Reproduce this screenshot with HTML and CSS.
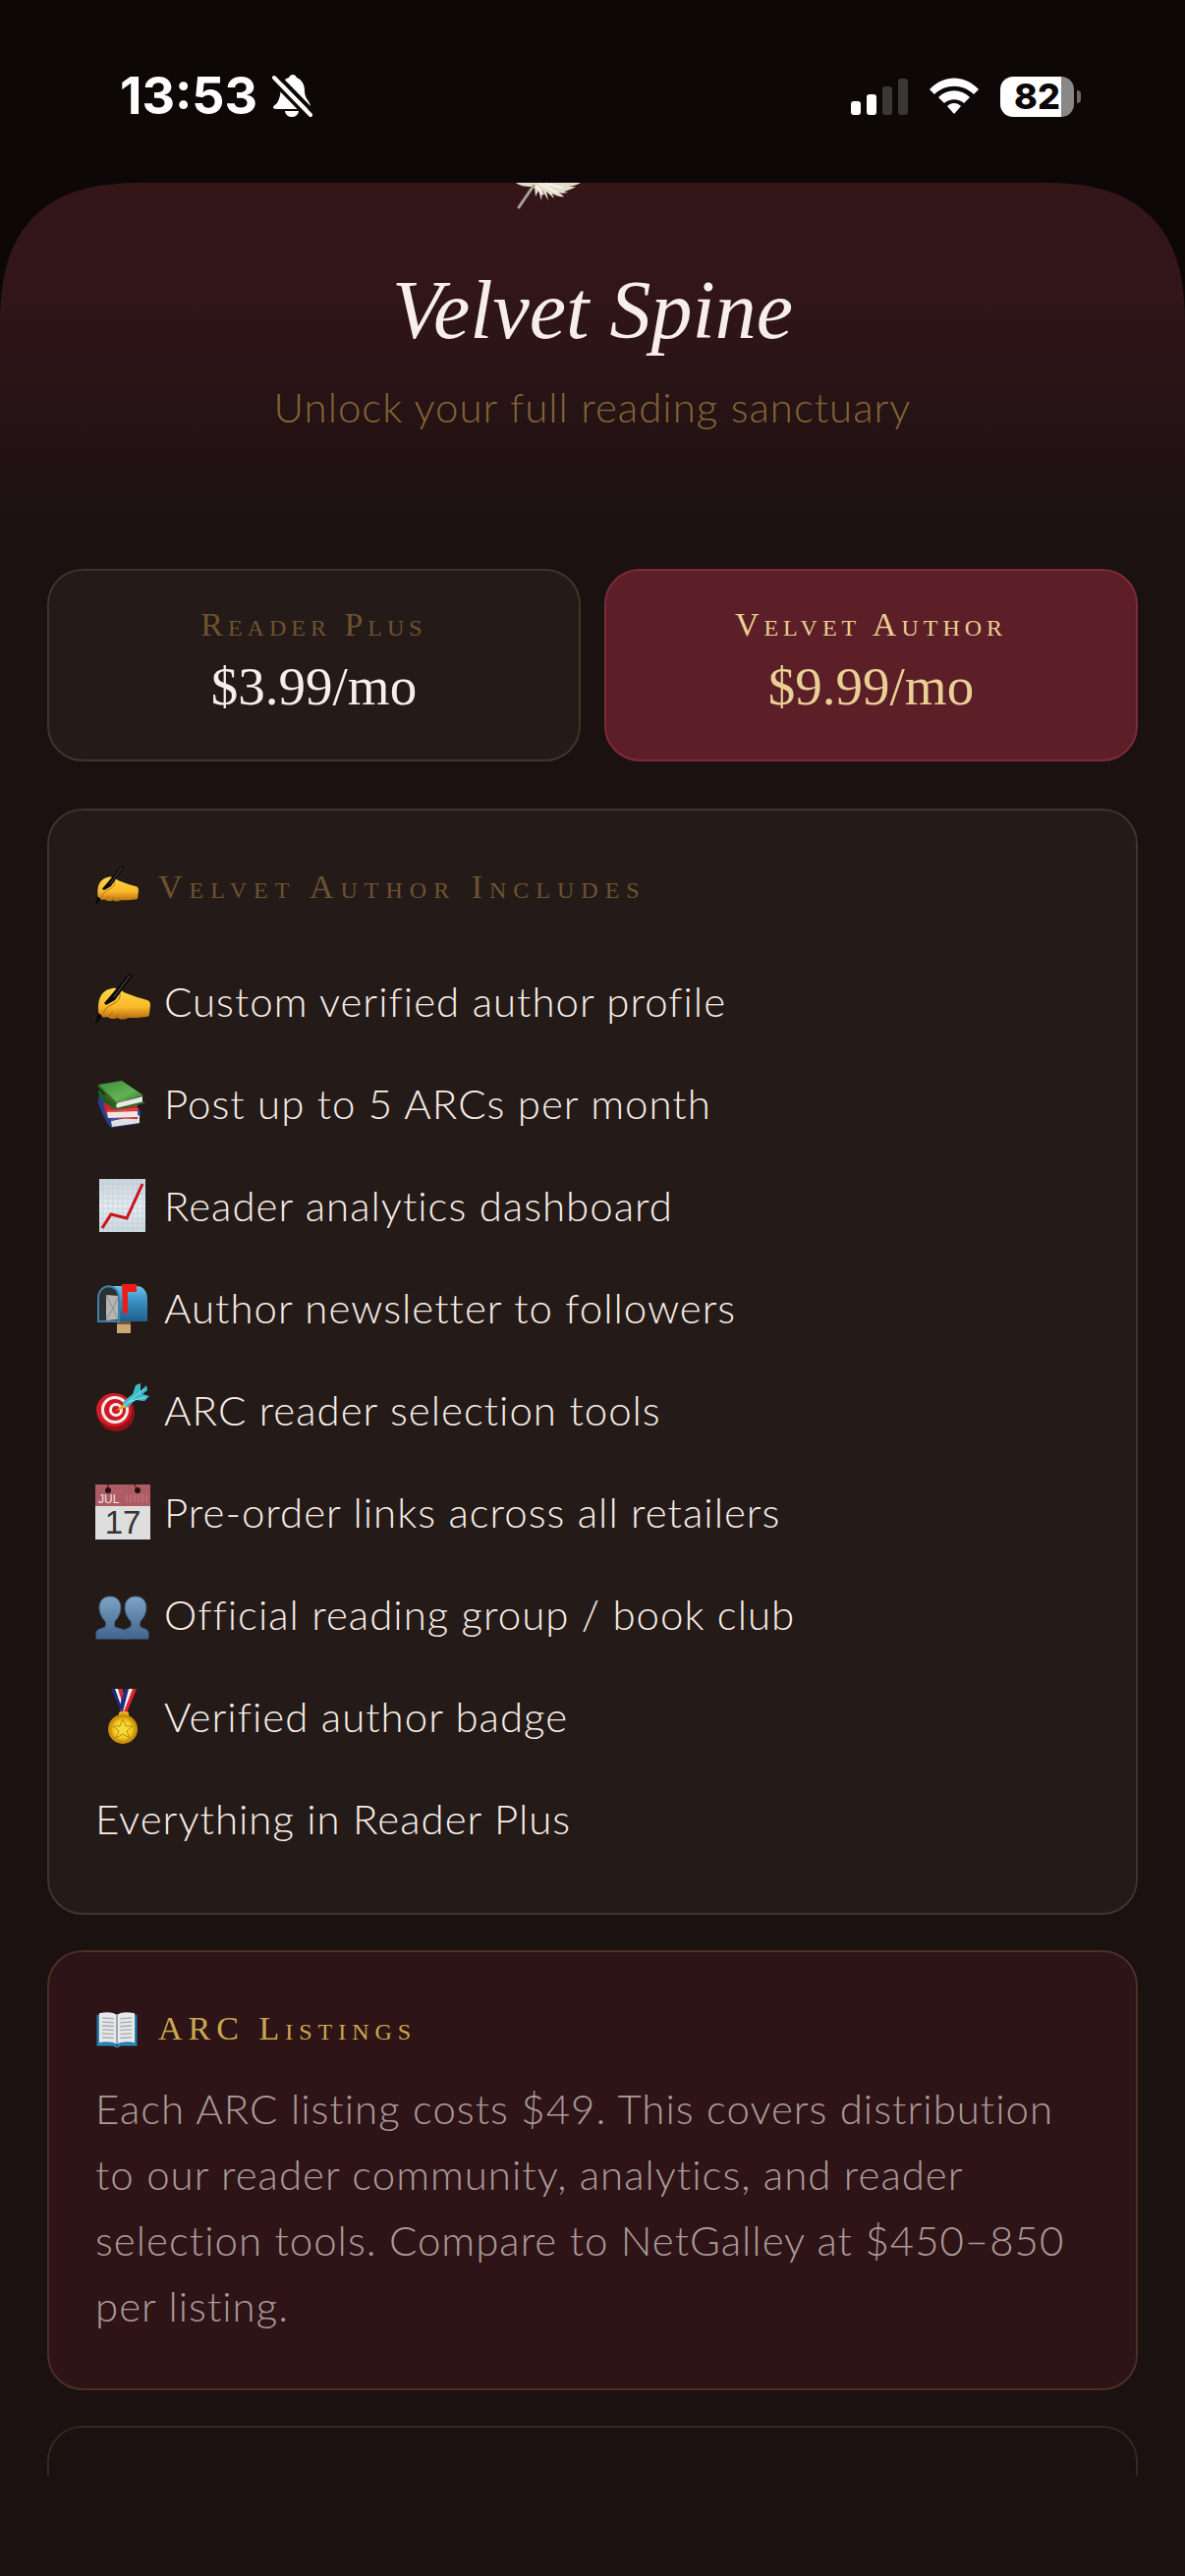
FILE: index.html
```html
<!DOCTYPE html>
<html lang="en">
<head>
<meta charset="utf-8">
<meta name="viewport" content="width=device-width, initial-scale=1">
<title>Velvet Spine</title>
<link rel="stylesheet" href="styles.css">
</head>
<body>
<svg class="defs" aria-hidden="true">
  <defs>
    <linearGradient id="skin" x1="0" y1="0" x2="0" y2="1"><stop offset="0" stop-color="#ffd84a"/><stop offset=".6" stop-color="#fbb82a"/><stop offset="1" stop-color="#b56a10"/></linearGradient>
    <linearGradient id="paper" x1="0" y1="0" x2="0" y2="1"><stop offset="0" stop-color="#c9d3da"/><stop offset=".5" stop-color="#e6edf3"/><stop offset="1" stop-color="#ccd7df"/></linearGradient>
    <linearGradient id="green" x1="0" y1="0" x2="1" y2="1"><stop offset="0" stop-color="#3d8b37"/><stop offset=".6" stop-color="#62b255"/><stop offset="1" stop-color="#1f7a25"/></linearGradient>
    <linearGradient id="mail" x1="0" y1="0" x2="0" y2="1"><stop offset="0" stop-color="#6cc3ea"/><stop offset=".4" stop-color="#3b93c6"/><stop offset="1" stop-color="#1f5f8b"/></linearGradient>
    <linearGradient id="bust" x1="0" y1="0" x2="0" y2="1"><stop offset="0" stop-color="#7fa3c6"/><stop offset="1" stop-color="#41658c"/></linearGradient>
    <radialGradient id="gold"><stop offset="0" stop-color="#ffef4a"/><stop offset=".7" stop-color="#f3ca22"/><stop offset="1" stop-color="#c98d0c"/></radialGradient>
    <symbol id="writing" viewBox="0 0 56 56">
      <path d="M3 35C3 24 7 17 17 15c5-1 9 1 12 4 8 3 16 6 24 8 2 1 3 2 3 5l-1 9c0 2-1 3-4 3-6 1-12 1-18 1-3 2-8 2-10 0-4 2-8 1-11-1-4 1-6 0-8-2-1-2-1-4-1-7z" fill="url(#skin)"/>
      <path d="M25 20c1 6-3 9-9 12-4 2-7 5-8 9M14 43l4-4M21 45l3-4M28 46l3-4" fill="none" stroke="#ad680e" stroke-width="1"/>
      <path d="M34 0l4 2-18 25-9 5-2-2 6-7z" fill="#0c0b0b"/><path d="M35 2L19 24" stroke="#5b5958" stroke-width="1"/>
      <path d="M3 40l4 3-6 8-1-1z" fill="#080707"/>
    </symbol>
  </defs>
</svg>
<div class="app">
  <div class="status">
    <div class="status-group">
      <span class="time">13:53</span>
      <svg class="bell" viewBox="0 0 42 46" aria-label="Silent mode">
        <path d="M5 31c4-5 4-9 5-16C11 8 14 5 18 4c1-2 2-3 4-3s3 1 4 3c5 2 8 7 8 13 0 7 3 9 5 13 2 4 1 6-2 6H5c-4 0-4-3 0-5z" fill="#fff"/>
        <path d="M14 38h14c-1 8-13 8-14 0z" fill="#fff"/>
        <path d="M5 0l38 39M0 6l38 39" stroke="#0d0807" stroke-width="4"/><path d="M3 4l37 38" stroke="#fff" stroke-width="4" stroke-linecap="round"/>
      </svg>
    </div>
    <div class="status-group status-right">
      <svg class="signal" viewBox="0 0 58 38" aria-label="Signal"><g fill="#fff"><rect y="24" width="10" height="14" rx="3"/><rect x="16" y="17" width="10" height="21" rx="3"/></g><g fill="#3b3736"><rect x="32" y="9" width="10" height="29" rx="3"/><rect x="48" y="1" width="10" height="37" rx="3"/></g></svg>
      <svg class="wifi" viewBox="0 0 50 38" aria-label="Wi-Fi"><g fill="#fff"><path d="M1 11C15-3 35-3 49 11c1 1 1 1 0 2l-4 4c-11-11-29-11-40 0l-4-4c-1-1-1-1 0-2z"/><path d="M9 20c9-9 23-9 32 0l-6 6c-6-5-14-5-20 0z"/><path d="M18 29c4-4 10-4 14 0l-6 7c-1 1-1 1-2 0z"/></g></svg>
      <div class="battery"><span class="battery-body">82</span><span class="battery-nub"></span></div>
    </div>
  </div>

  <main class="screen">
    <header class="hero">
      <svg class="feather" viewBox="0 0 156 28" aria-hidden="true">
        <path d="M0 0h66c-3 2-7 3-12 4 3 0 5 0 7 0-5 3-9 4-12 5l4 1c-4 1-7 1-9 0l5 4c-4 1-8-1-12-3l2 5-8-7 2 9-6-10-1 10-3-10-3 6-1-9-3 2V4C9 4 4 3 0 0z" fill="#e3dcca"/>
        <path d="M24 1l18 9M30 1l18 4M20 3l8 9" stroke="#f8f3e5" stroke-width="2"/>
        <path d="M18 3L3 25" stroke="#aaa09a" stroke-width="3" stroke-linecap="round"/>
      </svg>
      <h1>Velvet Spine</h1>
      <p class="tagline">Unlock your full reading sanctuary</p>
    </header>

    <div class="content">
      <div class="plans">
        <button class="plan" type="button"><span class="caps">Reader Plus</span><span class="price">$3.99/mo</span></button>
        <button class="plan plan-active" type="button"><span class="caps">Velvet Author</span><span class="price">$9.99/mo</span></button>
      </div>

      <section class="card">
        <h2 class="caps"><svg class="mini" aria-hidden="true"><use href="#writing"/></svg>Velvet Author Includes</h2>
        <ul class="features">
          <li><svg viewBox="0 0 56 56" aria-hidden="true"><use href="#writing"/></svg>Custom verified author profile</li>
          <li><svg viewBox="0 0 56 56" aria-hidden="true">
            <path d="M3 22l9-3 34 16-2 14-28 4c-6-7-10-17-13-25z" fill="#263f91"/><path d="M16 46l29-6v8l-28 4z" fill="#dfe0df"/><path d="M16 45l29-7" stroke="#395bb7" stroke-width="2"/>
            <path d="M9 19l34 10v15l-30-1c-4-7-5-15-4-24z" fill="#c9242c"/><path d="M12 37l31-1v6l-30 1z" fill="#eee8e3"/><path d="M12 36l32-2" stroke="#e64442" stroke-width="2"/>
            <path d="M3 14l18 16v4C9 28 2 22 3 14z" fill="#17651d"/><path d="M21 28l27-7v7l-26 6z" fill="#e9e9e3"/><path d="M3 9l24-4 22 15-28 8z" fill="url(#green)"/><path d="M3 10l18 18c-2 2-2 4 0 6l29-7" fill="none" stroke="#236d24" stroke-width="2"/>
          </svg>Post up to 5 ARCs per month</li>
          <li><svg viewBox="0 0 56 56" aria-hidden="true">
            <rect x="4" y="1" width="47" height="54" fill="url(#paper)"/><path d="M8 1v54M13 1v54M18 1v54M23 1v54M28 1v54M33 1v54M38 1v54M43 1v54M48 1v54M4 6h47M4 11h47M4 16h47M4 21h47M4 26h47M4 31h47M4 36h47M4 41h47M4 46h47M4 51h47" stroke="#b9c8d4" stroke-width="1" opacity=".6"/>
            <path d="M7 51l9-14 16 4L48 6" fill="none" stroke="#cc141c" stroke-width="3"/>
          </svg>Reader analytics dashboard</li>
          <li><svg viewBox="0 0 56 56" aria-hidden="true">
            <path d="M22 40h14v14H22z" fill="#c7a875"/><path d="M22 41h14v4H22z" fill="#725638"/>
            <path d="M12 6h30c7 0 11 6 11 13v23H12z" fill="url(#mail)"/><path d="M3 42V19C3 2 24 2 24 19v23z" fill="#2b3033" stroke="#3983ac" stroke-width="2"/>
            <path d="M11 15l12 1v24l-12 1z" fill="#b4b5b4"/><path d="M11 15l7 14 5-12M11 40l7-11 5 10" fill="none" stroke="#8b8c8b" stroke-width="1"/>
            <path d="M27 4h15v8H33v20c0 3-5 3-5 0z" fill="#ed1c17"/>
          </svg>Author newsletter to followers</li>
          <li><svg viewBox="0 0 56 56" aria-hidden="true">
            <ellipse cx="21" cy="31" rx="19" ry="19" fill="#970f17"/><ellipse cx="19" cy="28" rx="18" ry="17" fill="#d51c27"/><circle cx="20" cy="28" r="14" fill="#f5eeec"/><circle cx="20" cy="28" r="11" fill="#cf1824"/><circle cx="21" cy="28" r="7" fill="#f5eeec"/><circle cx="21" cy="28" r="4" fill="#cf1824"/>
            <path d="M21 29l9-8 3 4z" fill="#e8a91f"/><path d="M28 20l10-8 3-9 5-2v8l6-6 1 5-5 4 7 2-5 5-9-1-9 8z" fill="#3fbccb"/><path d="M29 24l20-17M33 20l18-5" stroke="#8be1e4" stroke-width="1"/>
          </svg>ARC reader selection tools</li>
          <li><svg viewBox="0 0 56 56" aria-hidden="true">
            <path d="M0 0h56v56H0z" fill="#dedede"/><path d="M0 0h56v22H0z" fill="#ad5c64"/><circle cx="13" cy="6" r="3" fill="#211"/><circle cx="43" cy="6" r="3" fill="#211"/><path d="M13 6V0M43 6l-3-6" stroke="#211"/>
            <path d="M32 18v-7M36 18v-7M40 18v-8M44 18v-8M48 18v-8M52 18v-8" stroke="#c58085"/><text x="3" y="19" class="cal-month">JUL</text><text x="28" y="50" class="cal-day">17</text>
          </svg>Pre-order links across all retailers</li>
          <li><svg viewBox="0 0 56 56" aria-hidden="true"><g fill="url(#bust)" stroke="#41658c" stroke-width="1"><path d="M27 53V47c0-3 6-4 9-6 1-1 1-4 0-6-9-9-8-25 5-25s14 16 5 25c-1 2-1 5 0 6 3 2 8 2 8 6v6z"/><path d="M1 53v-6c0-4 6-4 9-6 1-1 1-4 0-6C1 26 2 10 15 10s14 16 5 25c-1 2-1 5 0 6 3 2 12 2 14 7 1 2 1 3 1 5z"/></g></svg>Official reading group / book club</li>
          <li><svg viewBox="0 0 56 56" aria-hidden="true">
            <path d="M16 0h11l7 22-7 2z" fill="#1d2c82"/><path d="M20 0h7l5 18-4 4z" fill="#f1eff0"/><path d="M23 0h4l4 13-2 7z" fill="#d62631"/><path d="M42 0H31l-6 22 7 2z" fill="#e1242f"/><path d="M38 0h-7l-6 20 4 3z" fill="#f1eff0"/><path d="M34 0h-4l-6 20 4 3z" fill="#1d2c82"/>
            <rect x="24" y="23" width="10" height="6" rx="2" fill="#e2b11a"/><circle cx="28" cy="41" r="15" fill="#c88e0e"/><circle cx="28" cy="41" r="13" fill="url(#gold)"/><path d="M28 31l3 7h7l-6 5 3 7-7-4-7 4 3-7-6-5h7z" fill="#f6db3c" stroke="#b98a0e" stroke-width="1"/>
          </svg>Verified author badge</li>
          <li>Everything in Reader Plus</li>
        </ul>
      </section>

      <section class="card card-arc">
        <h2 class="caps"><svg class="mini" viewBox="0 0 56 56" aria-hidden="true">
          <path d="M2 10h52v39H2z" fill="#2379ad"/><path d="M5 8c9-2 17-2 23 2 6-4 14-4 23-2v38c-9-2-17-1-23 2-6-3-14-4-23-2z" fill="#e7e8ea"/><path d="M28 10v38" stroke="#8c9298" stroke-width="2"/><path d="M9 14l15 1M9 19l15 1M9 24l15 1M9 29l15 1M9 34l15 1M9 39l15 1M47 14l-15 1M47 19l-15 1M47 24l-15 1M47 29l-15 1M47 34l-15 1M47 39l-15 1" stroke="#adb2b7" stroke-width="2"/><path d="M2 49h22c2 3 6 3 8 0h22" fill="none" stroke="#2b9bce" stroke-width="2"/>
        </svg>ARC Listings</h2>
        <p>Each ARC listing costs $49. This covers distribution to our reader community, analytics, and reader selection tools. Compare to NetGalley at $450–850 per listing.</p>
      </section>

      <section class="card card-next"></section>
    </div>
  </main>
</div>
</body>
</html>
```
FILE: styles.css
```css
* { box-sizing: border-box; }

body {
  margin: 0;
  background: #0d0807;
  color: #f8eee8;
  font-family: Lato, "Liberation Sans", sans-serif;
  font-weight: 300;
  font-size: 42px;
}

h1, h2, p, ul { margin: 0; padding: 0; }
h1, .caps, .price { font-family: "Liberation Serif", serif; font-weight: 400; }

.defs { display: block; width: 0; height: 0; }

.app {
  display: flex;
  flex-direction: column;
  height: 100vh;
}

.status {
  flex: none;
  display: flex;
  justify-content: space-between;
  height: 186px;
  padding: 68px 106px 0 122px;
  color: #fff;
  font-family: Inter, sans-serif;
}

.status-group { display: flex; align-items: center; height: 60px; gap: 14px; }
.status-right { gap: 22px; }
.time { font-size: 52px; font-weight: 700; line-height: 60px; }
.bell { width: 42px; height: 46px; }
.signal { width: 58px; height: 38px; }
.wifi { width: 50px; height: 38px; }
.battery { display: flex; align-items: center; gap: 3px; }

.battery-body {
  width: 75px;
  height: 41px;
  border-radius: 13px;
  background: linear-gradient(90deg, #fff 83%, #8a8787 83%);
  color: #0d0807;
  font-size: 36px;
  font-weight: 800;
  line-height: 41px;
  text-align: center;
}

.battery-nub { width: 4px; height: 13px; border-radius: 0 4px 4px 0; background: #6e6b6a; }

.screen {
  flex: 1;
  min-height: 0;
  overflow: hidden;
  border-radius: 120px 120px 0 0;
  background: #1a1110;
  border-bottom: 102px solid #1a1110;
}

@supports (corner-shape: superellipse(1)) {
  .screen {
    border-radius: 150px 150px 0 0;
    corner-shape: superellipse(1.4);
  }
}

.hero {
  height: 393px;
  text-align: center;
  background: linear-gradient(#341619, #311519 28%, #1a1110 94%);
}

.feather { display: block; width: 156px; height: 28px; margin: 0 auto; }
h1 { padding-top: 50px; font-size: 84px; line-height: 104px; font-style: italic; }
.tagline { padding-top: 20px; line-height: 52px; letter-spacing: 1px; color: #836537; }

.content { display: flex; flex-direction: column; gap: 36px; padding: 0 48px; }

.plans { display: grid; grid-template-columns: 1fr 1fr; gap: 24px; margin-bottom: 12px; }

.plan {
  display: flex;
  flex-direction: column;
  align-items: center;
  gap: 6px;
  height: 196px;
  padding: 34px 24px 0;
  border: 2px solid #40352a;
  border-radius: 36px;
  background: #241b18;
  color: #f8eee8;
}

.caps { font-size: 34px; line-height: 42px; font-variant: small-caps; letter-spacing: 5px; }
.price { font-size: 55px; line-height: 72px; }

.plan .caps { color: #6e5230; }
.plan-active { background: #5c1e27; border-color: #7d2a3c; color: #e8cf94; }
.plan-active .caps { color: #e8cf94; }

.card {
  padding: 56px 47px 44px;
  border: 2px solid #40352a;
  border-radius: 36px;
  background: #241b18;
}

h2.caps { display: flex; align-items: center; gap: 20px; letter-spacing: 7px; color: #6e5230; }
.mini { width: 44px; height: 44px; }

.features { display: flex; flex-direction: column; padding-top: 42px; list-style: none; }
.features li { display: flex; align-items: center; gap: 14px; height: 104px; letter-spacing: 1px; }
.features svg { flex: none; width: 56px; height: 56px; letter-spacing: 0; }

.cal-month { font: 12px "Liberation Sans", sans-serif; fill: #f2e4e4; }
.cal-day { font: 33px "Liberation Sans", sans-serif; fill: #343434; text-anchor: middle; }

.card-arc { padding-bottom: 50px; background: #2f1417; border-color: #4a3026; }
.card-arc h2.caps { letter-spacing: 6px; color: #c8a850; }
.card-arc p { padding-top: 26px; line-height: 67px; letter-spacing: 1px; color: #aa9b99; }
.card-next { height: 300px; background: none; border-color: #342a1e; }
```
